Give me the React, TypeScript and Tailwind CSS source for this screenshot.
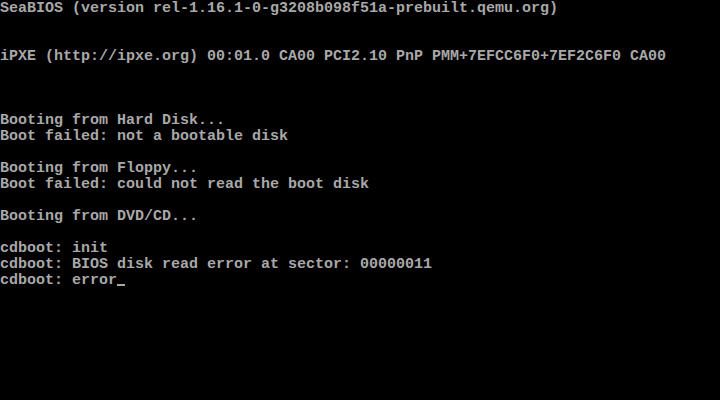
import React from "react";

const lines: string[] = [
  "SeaBIOS (version rel-1.16.1-0-g3208b098f51a-prebuilt.qemu.org)",
  "",
  "",
  "iPXE (http://ipxe.org) 00:01.0 CA00 PCI2.10 PnP PMM+7EFCC6F0+7EF2C6F0 CA00",
  "",
  "",
  "",
  "Booting from Hard Disk...",
  "Boot failed: not a bootable disk",
  "",
  "Booting from Floppy...",
  "Boot failed: could not read the boot disk",
  "",
  "Booting from DVD/CD...",
  "",
  "cdboot: init",
  "cdboot: BIOS disk read error at sector: 00000011",
];

export default function App() {
  return (
    <div className="w-[720px] h-[400px] bg-black overflow-hidden pt-[1px] text-[#a8a8a8] font-['Liberation_Mono',monospace] font-bold text-[15px] leading-[16px]">
      {lines.map((l, i) => (
        <div key={i} className="h-[16px] whitespace-pre">
          {l}
        </div>
      ))}
      <div className="h-[16px] whitespace-pre flex items-start">
        <span>cdboot: error</span>
        <span className="inline-block w-[9px] h-[16px] relative">
          <span className="absolute left-0 top-[11px] w-[8px] h-[2px] bg-[#a8a8a8]" />
        </span>
      </div>
    </div>
  );
}
